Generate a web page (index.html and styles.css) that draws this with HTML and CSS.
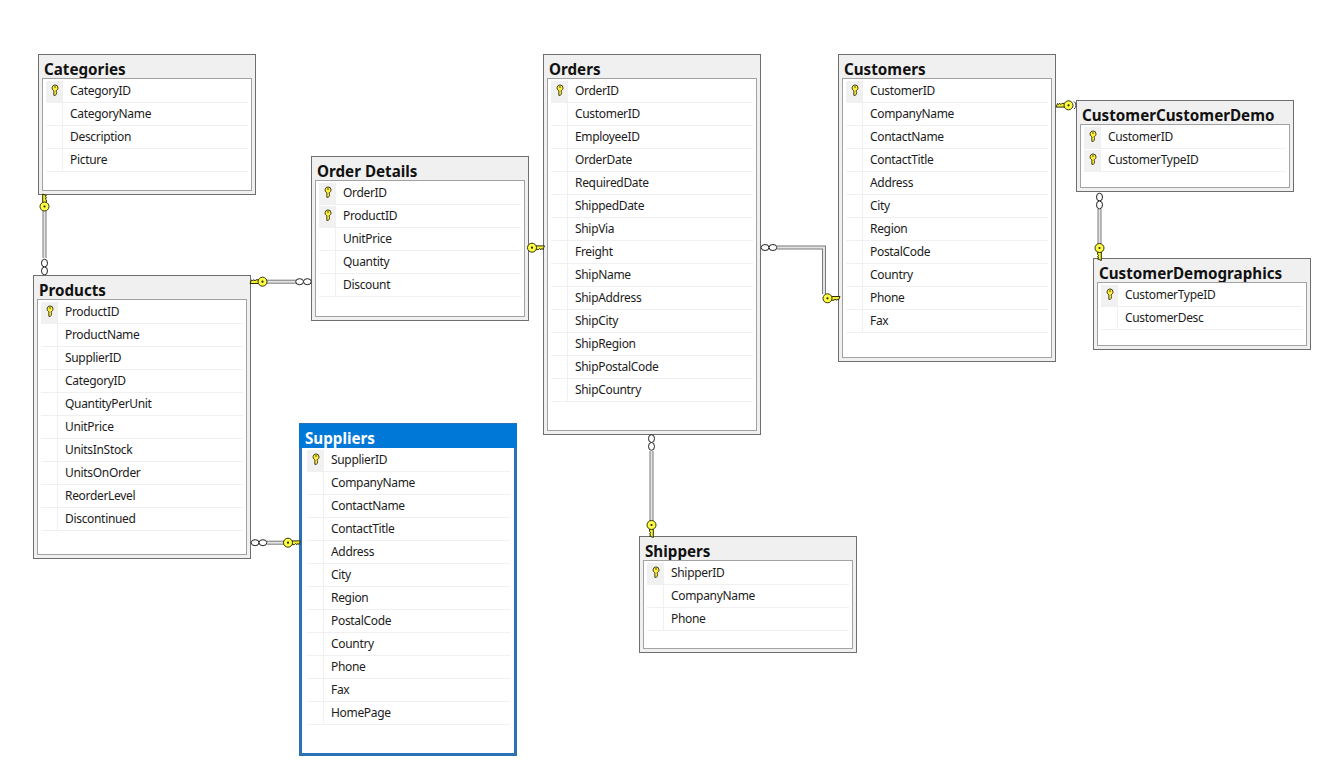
FILE: index.html
```html
<!DOCTYPE html>
<html lang="en">
<head>
<meta charset="utf-8">
<title>Northwind diagram</title>
<link rel="stylesheet" href="styles.css">
</head>
<body>
<main class="canvas">
  <section class="tbl t-categories">
    <h2 class="title">Categories</h2>
    <ul class="rows">
      <li class="row pk"><svg class="kicon" viewBox="0 0 9 13"><use href="#pkey"/></svg><span>CategoryID</span></li>
      <li class="row"><span>CategoryName</span></li>
      <li class="row"><span>Description</span></li>
      <li class="row"><span>Picture</span></li>
    </ul>
  </section>
  <section class="tbl t-details">
    <h2 class="title">Order Details</h2>
    <ul class="rows">
      <li class="row pk"><svg class="kicon" viewBox="0 0 9 13"><use href="#pkey"/></svg><span>OrderID</span></li>
      <li class="row pk"><svg class="kicon" viewBox="0 0 9 13"><use href="#pkey"/></svg><span>ProductID</span></li>
      <li class="row"><span>UnitPrice</span></li>
      <li class="row"><span>Quantity</span></li>
      <li class="row"><span>Discount</span></li>
    </ul>
  </section>
  <section class="tbl t-products">
    <h2 class="title">Products</h2>
    <ul class="rows">
      <li class="row pk"><svg class="kicon" viewBox="0 0 9 13"><use href="#pkey"/></svg><span>ProductID</span></li>
      <li class="row"><span>ProductName</span></li>
      <li class="row"><span>SupplierID</span></li>
      <li class="row"><span>CategoryID</span></li>
      <li class="row"><span>QuantityPerUnit</span></li>
      <li class="row"><span>UnitPrice</span></li>
      <li class="row"><span>UnitsInStock</span></li>
      <li class="row"><span>UnitsOnOrder</span></li>
      <li class="row"><span>ReorderLevel</span></li>
      <li class="row"><span>Discontinued</span></li>
    </ul>
  </section>
  <section class="tbl selected t-suppliers">
    <h2 class="title">Suppliers</h2>
    <ul class="rows">
      <li class="row pk"><svg class="kicon" viewBox="0 0 9 13"><use href="#pkey"/></svg><span>SupplierID</span></li>
      <li class="row"><span>CompanyName</span></li>
      <li class="row"><span>ContactName</span></li>
      <li class="row"><span>ContactTitle</span></li>
      <li class="row"><span>Address</span></li>
      <li class="row"><span>City</span></li>
      <li class="row"><span>Region</span></li>
      <li class="row"><span>PostalCode</span></li>
      <li class="row"><span>Country</span></li>
      <li class="row"><span>Phone</span></li>
      <li class="row"><span>Fax</span></li>
      <li class="row"><span>HomePage</span></li>
    </ul>
  </section>
  <section class="tbl t-orders">
    <h2 class="title">Orders</h2>
    <ul class="rows">
      <li class="row pk"><svg class="kicon" viewBox="0 0 9 13"><use href="#pkey"/></svg><span>OrderID</span></li>
      <li class="row"><span>CustomerID</span></li>
      <li class="row"><span>EmployeeID</span></li>
      <li class="row"><span>OrderDate</span></li>
      <li class="row"><span>RequiredDate</span></li>
      <li class="row"><span>ShippedDate</span></li>
      <li class="row"><span>ShipVia</span></li>
      <li class="row"><span>Freight</span></li>
      <li class="row"><span>ShipName</span></li>
      <li class="row"><span>ShipAddress</span></li>
      <li class="row"><span>ShipCity</span></li>
      <li class="row"><span>ShipRegion</span></li>
      <li class="row"><span>ShipPostalCode</span></li>
      <li class="row"><span>ShipCountry</span></li>
    </ul>
  </section>
  <section class="tbl t-shippers">
    <h2 class="title">Shippers</h2>
    <ul class="rows">
      <li class="row pk"><svg class="kicon" viewBox="0 0 9 13"><use href="#pkey"/></svg><span>ShipperID</span></li>
      <li class="row"><span>CompanyName</span></li>
      <li class="row"><span>Phone</span></li>
    </ul>
  </section>
  <section class="tbl t-customers">
    <h2 class="title">Customers</h2>
    <ul class="rows">
      <li class="row pk"><svg class="kicon" viewBox="0 0 9 13"><use href="#pkey"/></svg><span>CustomerID</span></li>
      <li class="row"><span>CompanyName</span></li>
      <li class="row"><span>ContactName</span></li>
      <li class="row"><span>ContactTitle</span></li>
      <li class="row"><span>Address</span></li>
      <li class="row"><span>City</span></li>
      <li class="row"><span>Region</span></li>
      <li class="row"><span>PostalCode</span></li>
      <li class="row"><span>Country</span></li>
      <li class="row"><span>Phone</span></li>
      <li class="row"><span>Fax</span></li>
    </ul>
  </section>
  <section class="tbl t-ccd">
    <h2 class="title">CustomerCustomerDemo</h2>
    <ul class="rows">
      <li class="row pk"><svg class="kicon" viewBox="0 0 9 13"><use href="#pkey"/></svg><span>CustomerID</span></li>
      <li class="row pk"><svg class="kicon" viewBox="0 0 9 13"><use href="#pkey"/></svg><span>CustomerTypeID</span></li>
    </ul>
  </section>
  <section class="tbl t-demo">
    <h2 class="title">CustomerDemographics</h2>
    <ul class="rows">
      <li class="row pk"><svg class="kicon" viewBox="0 0 9 13"><use href="#pkey"/></svg><span>CustomerTypeID</span></li>
      <li class="row"><span>CustomerDesc</span></li>
    </ul>
  </section>

  <svg class="links" width="1322" height="768" viewBox="0 0 1322 768">
    <defs>
      <g id="pkey">
        <path d="M4.5 .8a3.4 3.4 0 0 1 3.4 3.4c0 1.5-.9 2.6-2.1 3.1v1.2l1 .8-1 .9.6.8-1.7 1.5H3.2V7.3A3.4 3.4 0 0 1 4.5 .8z" fill="#ffef3a" stroke="#3d3a18" stroke-width="1.1"/>
        <circle cx="4.5" cy="3.2" r=".9" fill="#3d3a18"/>
      </g>
      <g id="rkey">
        <path d="M4 -1.8H12.5L10.9 1.9L9.9 .7L8.8 2.1L7.7 .7L6.6 1.9H4z" fill="#f6f02e" stroke="#2c2c0c" stroke-width="1"/>
        <circle r="4.5" fill="#ffff44" stroke="#33330f" stroke-width="1"/>
        <circle r="1.1" fill="#22220a"/>
      </g>
      <g id="inf">
        <ellipse cx="-3.9" rx="3.9" ry="3" fill="#fff" stroke="#222" stroke-width="1"/>
        <ellipse cx="3.9" rx="3.9" ry="3" fill="#fff" stroke="#222" stroke-width="1"/>
      </g>
    </defs>

    <path class="wire-o" d="M44.5 211V258"/><path class="wire-i" d="M44.5 211V258"/>
    <use href="#rkey" transform="translate(44.5 206.5) rotate(-90)"/>
    <use href="#inf" transform="translate(44.5 267) rotate(90)"/>

    <path class="wire-o" d="M266 281.7H296"/><path class="wire-i" d="M266 281.7H296"/>
    <use href="#rkey" transform="translate(262.5 281.7) rotate(180)"/>
    <use href="#inf" transform="translate(303.5 281.7)"/>

    <path class="wire-o" d="M267 542.7H285"/><path class="wire-i" d="M267 542.7H285"/>
    <use href="#inf" transform="translate(259 542.7)"/>
    <use href="#rkey" transform="translate(288 542.7)"/>

    <use href="#rkey" transform="translate(532 247.7)"/>

    <path class="wire-o" d="M777 247.5H824V294"/><path class="wire-i" d="M777 247.5H824V294"/>
    <use href="#inf" transform="translate(769 247.5)"/>
    <use href="#rkey" transform="translate(827.5 298.3)"/>

    <use href="#rkey" transform="translate(1068.5 105.3) rotate(180)"/>
    <path class="arc" d="M1074 101.5a4.5 4.5 0 0 1 0 7.5"/>

    <path class="wire-o" d="M1099.5 209V244"/><path class="wire-i" d="M1099.5 209V244"/>
    <use href="#inf" transform="translate(1099.5 201) rotate(90)"/>
    <use href="#rkey" transform="translate(1099.5 248) rotate(90)"/>

    <path class="wire-o" d="M651.5 451V521"/><path class="wire-i" d="M651.5 451V521"/>
    <use href="#inf" transform="translate(651.5 442.5) rotate(90)"/>
    <use href="#rkey" transform="translate(651.5 525) rotate(90)"/>
  </svg>
</main>
</body>
</html>
```
FILE: styles.css
```css
* { box-sizing: border-box; }
html, body { margin: 0; padding: 0; background: #fff; }
.canvas {
  position: relative;
  width: 1322px;
  height: 768px;
  overflow: hidden;
  background: #fff;
  font-family: "Noto Sans", "Open Sans", "Liberation Sans", sans-serif;
  color: #1c1c1c;
}
.tbl {
  position: absolute;
  width: 218px;
  display: flex;
  flex-direction: column;
  padding: 0 3px 3px;
  background: #f0f0f0;
  border: 1px solid #6e6e6e;
}
.title {
  flex: none;
  height: 23px;
  margin: 0;
  padding: 5px 0 0 2px;
  font-size: 15.2px;
  line-height: 18px;
  font-weight: 700;
  color: #111;
  white-space: nowrap;
}
.rows {
  flex: 1;
  margin: 0;
  padding: 1px 3px 0 3px;
  list-style: none;
  background: #fff;
  border: 1px solid #a2a2a2;
}
.row {
  height: 23px;
  display: flex;
  align-items: center;
  padding: 0 0 2px 24px;
  border-bottom: 1px solid #f0f0f0;
  font-size: 12px;
  letter-spacing: -0.32px;
  position: relative;
  white-space: nowrap;
}
.row::before {
  content: "";
  position: absolute;
  left: 16px;
  top: 0;
  bottom: -1px;
  width: 1px;
  background: #f0f0f0;
}
.row.pk::after {
  content: "";
  position: absolute;
  left: 0;
  top: 1px;
  bottom: 0;
  width: 16px;
  background: #f1f1f1;
}
.kicon {
  position: absolute;
  z-index: 1;
  left: 5px;
  top: 4px;
  width: 8px;
  height: 12px;
}
.selected {
  padding: 0;
  border: 3px solid #2a72b5;
  background: #2a72b5;
}
.selected .title {
  margin: -2px -3px 0;
  height: 24px;
  padding: 5px 0 0 6px;
  background: #0078d7;
  color: #fff;
}
.selected .rows { border-width: 0; padding: 1px 4px 0 5px; }

.t-categories { left: 38px; top: 54px; height: 141px; }
.t-details { left: 311px; top: 156px; height: 165px; }
.t-products { left: 33px; top: 275px; height: 284px; }
.t-suppliers { left: 299px; top: 423px; height: 333px; }
.t-orders { left: 543px; top: 54px; height: 381px; }
.t-shippers { left: 639px; top: 536px; height: 117px; }
.t-customers { left: 838px; top: 54px; height: 308px; }
.t-ccd { left: 1076px; top: 100px; height: 92px; }
.t-demo { left: 1093px; top: 258px; height: 92px; }

.links { position: absolute; left: 0; top: 0; pointer-events: none; }
.wire-o { fill: none; stroke: #7a7a7a; stroke-width: 4; }
.wire-i { fill: none; stroke: #e4e4e4; stroke-width: 2; }
.arc { fill: #fff; stroke: #333; stroke-width: 1; }
```
